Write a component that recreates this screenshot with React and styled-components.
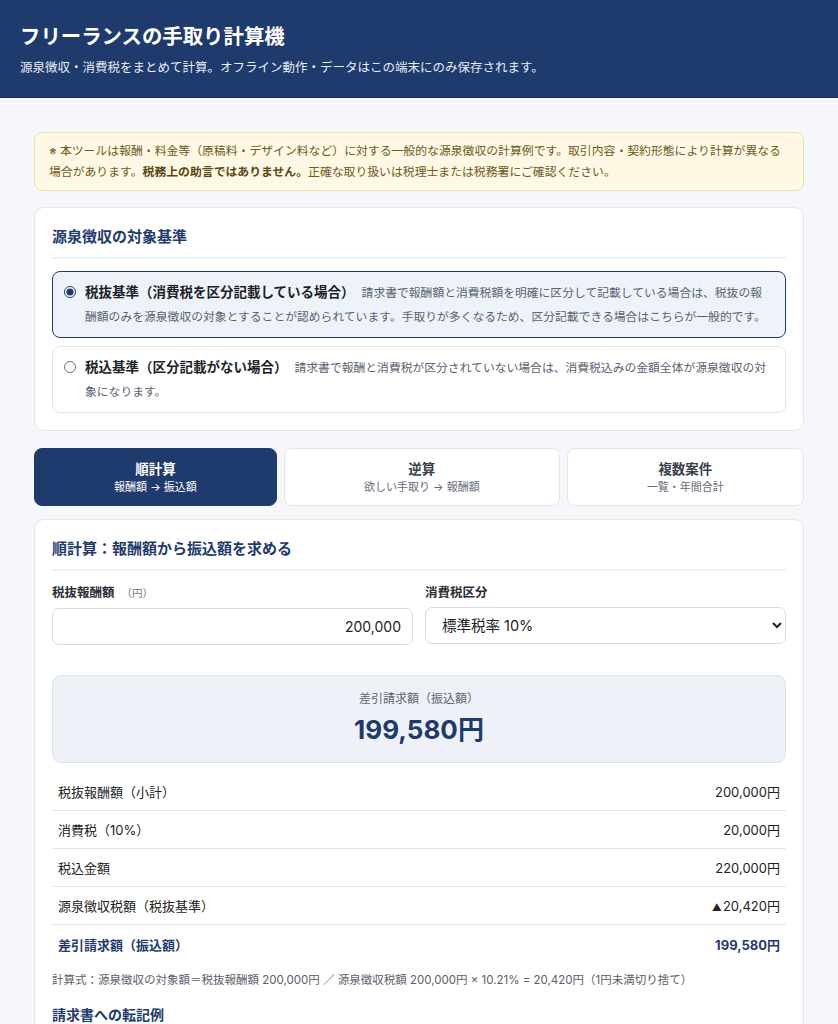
import React, { useState } from "react";
import styled, { createGlobalStyle } from "styled-components";

const NAVY = "#1f3a6d";

const Global = createGlobalStyle`
  * { box-sizing: border-box; }
  body {
    margin: 0;
    background: #f5f7fb;
    font-family: "Inter", "Noto Sans CJK JP", sans-serif;
    color: #222;
  }
`;

const Header = styled.header`
  background: ${NAVY};
  color: #fff;
  padding: 22px 20px 20px;
  border-bottom: 1px solid #16305c;
`;

const Title = styled.h1`
  margin: 0;
  font-size: 20.4px;
  font-weight: 700;
  line-height: 30px;
`;

const Subtitle = styled.p`
  margin: 7px 0 0;
  font-size: 12.5px;
  line-height: 18px;
  color: #e8edf6;
`;

const Main = styled.main`
  padding: 34px 34px 40px;
  display: flex;
  flex-direction: column;
`;

const Notice = styled.div`
  background: #fef8e4;
  border: 1px solid #f0dca6;
  border-radius: 8px;
  padding: 7.5px 12px 7.5px 14px;
  font-size: 11.85px;
  line-height: 21px;
  color: #6d5a1c;
  margin-bottom: 16px;
  b { font-weight: 700; color: #5a4710; }
`;

const Card = styled.section`
  background: #fff;
  border: 1px solid #e2e7ee;
  border-radius: 10px;
  padding: 18px 17px 17px;
`;

const CardTitle = styled.h2`
  margin: 0 0 12px;
  font-size: 15px;
  font-weight: 700;
  color: ${NAVY};
  line-height: 22px;
  padding: 0 0 9px;
  border-bottom: 2px solid #eef1f5;
`;

const Options = styled.div`
  display: flex;
  flex-direction: column;
  gap: 8px;
`;

const Option = styled.label`
  display: flex;
  align-items: flex-start;
  gap: 9px;
  padding: 8px 14px 8px 11px;
  border-radius: 8px;
  border: 1px solid ${(p) => (p.$active ? NAVY : "#e2e7ee")};
  background: ${(p) => (p.$active ? "#eef3fa" : "#fff")};
  cursor: pointer;
`;

const Radio = styled.input`
  margin: 6px 0 0;
  width: 12px;
  height: 12px;
  flex: none;
  accent-color: ${NAVY};
`;

const OptionText = styled.span`
  font-size: 11.8px;
  line-height: 24px;
  color: #5a6170;
  strong {
    font-size: 13.5px;
    color: #1c1f26;
    font-weight: 700;
    margin-right: 7px;
  }
`;

const Tabs = styled.div`
  display: flex;
  gap: 7px;
  margin: 17px 0 13px;
`;

const Tab = styled.button`
  flex: 1 1 auto;
  height: 58px;
  border-radius: 8px;
  border: 1px solid ${(p) => (p.$active ? NAVY : "#e2e7ee")};
  background: ${(p) => (p.$active ? NAVY : "#fff")};
  font-family: inherit;
  display: flex;
  flex-direction: column;
  align-items: center;
  justify-content: center;
  padding: 0 30px;
  cursor: pointer;
`;

const TabTitle = styled.span`
  font-size: 13.5px;
  font-weight: 700;
  line-height: 20px;
  color: ${(p) => (p.$active ? "#fff" : "#3a3f4a")};
`;

const TabSub = styled.span`
  font-size: 11px;
  line-height: 16px;
  color: ${(p) => (p.$active ? "#fff" : "#666c78")};
`;

const FormRow = styled.div`
  display: grid;
  grid-template-columns: 1fr 1fr;
  gap: 12px;
  margin-top: 1px;
`;

const Field = styled.div`
  display: flex;
  flex-direction: column;
  gap: 4px;
`;

const Label = styled.label`
  font-size: 12.5px;
  font-weight: 700;
  color: #2a2e36;
  line-height: 20px;
  small {
    font-size: 10.5px;
    font-weight: 400;
    color: #777;
    margin-left: 7px;
  }
`;

const Input = styled.input`
  height: 37px;
  border: 1px solid #d6dce5;
  border-radius: 7px;
  padding: 0 11px;
  font-size: 14px;
  font-family: inherit;
  text-align: right;
  color: #222;
  background: #fff;
`;

const Select = styled.select`
  height: 37px;
  border: 1px solid #d6dce5;
  border-radius: 7px;
  padding: 0 8px 0 12px;
  font-size: 14.5px;
  font-family: inherit;
  color: #222;
  background: #fff;
`;

const ResultBox = styled.div`
  margin-top: 30px;
  background: #eef2f8;
  border: 1px solid #dbe2ec;
  border-radius: 9px;
  height: 88px;
  display: flex;
  flex-direction: column;
  align-items: center;
  justify-content: center;
  gap: 4px;
`;

const ResultLabel = styled.div`
  font-size: 12px;
  color: #60656f;
  line-height: 18px;
`;

const ResultValue = styled.div`
  font-size: 26px;
  font-weight: 700;
  color: ${NAVY};
  line-height: 36px;
`;

const Table = styled.div`
  margin-top: 10px;
  display: flex;
  flex-direction: column;
`;

const Row = styled.div`
  display: flex;
  justify-content: space-between;
  align-items: center;
  height: 38px;
  padding: 0 6px;
  font-size: 13px;
  border-bottom: ${(p) => (p.$total ? "none" : "1px solid #e2e7ee")};
  font-weight: ${(p) => (p.$total ? 700 : 400)};
  color: ${(p) => (p.$total ? NAVY : "#222")};
`;

const Minus = styled.span`
  font-size: 10px;
  margin-right: 1px;
`;

const Formula = styled.p`
  margin: 8px 0 0;
  font-size: 11.5px;
  line-height: 18px;
  color: #5b606a;
`;

const SubHeading = styled.h3`
  margin: 15px 0 0;
  font-size: 14px;
  font-weight: 700;
  color: ${NAVY};
  line-height: 22px;
`;

export default function App() {
  const [basis, setBasis] = useState("ex");
  const [tab, setTab] = useState(0);
  const rows = [
    ["税抜報酬額（小計）", "200,000円"],
    ["消費税（10%）", "20,000円"],
    ["税込金額", "220,000円"],
  ];
  const tabs = [
    ["順計算", "報酬額 → 振込額"],
    ["逆算", "欲しい手取り → 報酬額"],
    ["複数案件", "一覧・年間合計"],
  ];
  return (
    <>
      <Global />
      <Header>
        <Title>フリーランスの手取り計算機</Title>
        <Subtitle>源泉徴収・消費税をまとめて計算。オフライン動作・データはこの端末にのみ保存されます。</Subtitle>
      </Header>
      <Main>
        <Notice>
          ※ 本ツールは報酬・料金等（原稿料・デザイン料など）に対する一般的な源泉徴収の計算例です。取引内容・契約形態により計算が異なる場合があります。<b>税務上の助言ではありません。</b>正確な取り扱いは税理士または税務署にご確認ください。
        </Notice>
        <Card>
          <CardTitle>源泉徴収の対象基準</CardTitle>
          <Options>
            <Option $active={basis === "ex"}>
              <Radio type="radio" name="basis" checked={basis === "ex"} onChange={() => setBasis("ex")} />
              <OptionText>
                <strong>税抜基準（消費税を区分記載している場合）</strong>
                請求書で報酬額と消費税額を明確に区分して記載している場合は、税抜の報酬額のみを源泉徴収の対象とすることが認められています。手取りが多くなるため、区分記載できる場合はこちらが一般的です。
              </OptionText>
            </Option>
            <Option $active={basis === "in"}>
              <Radio type="radio" name="basis" checked={basis === "in"} onChange={() => setBasis("in")} />
              <OptionText>
                <strong>税込基準（区分記載がない場合）</strong>
                請求書で報酬と消費税が区分されていない場合は、消費税込みの金額全体が源泉徴収の対象になります。
              </OptionText>
            </Option>
          </Options>
        </Card>
        <Tabs>
          {tabs.map(([t, s], i) => (
            <Tab key={t} $active={tab === i} onClick={() => setTab(i)}>
              <TabTitle $active={tab === i}>{t}</TabTitle>
              <TabSub $active={tab === i}>{s}</TabSub>
            </Tab>
          ))}
        </Tabs>
        <Card>
          <CardTitle>順計算：報酬額から振込額を求める</CardTitle>
          <FormRow>
            <Field>
              <Label>
                税抜報酬額<small>（円）</small>
              </Label>
              <Input defaultValue="200,000" />
            </Field>
            <Field>
              <Label>消費税区分</Label>
              <Select defaultValue="10">
                <option value="10">標準税率 10%</option>
                <option value="8">軽減税率 8%</option>
                <option value="0">非課税・免税 0%</option>
              </Select>
            </Field>
          </FormRow>
          <ResultBox>
            <ResultLabel>差引請求額（振込額）</ResultLabel>
            <ResultValue>199,580円</ResultValue>
          </ResultBox>
          <Table>
            {rows.map(([k, v]) => (
              <Row key={k}>
                <span>{k}</span>
                <span>{v}</span>
              </Row>
            ))}
            <Row>
              <span>源泉徴収税額（税抜基準）</span>
              <span>
                <Minus>▲</Minus>20,420円
              </span>
            </Row>
            <Row $total>
              <span>差引請求額（振込額）</span>
              <span>199,580円</span>
            </Row>
          </Table>
          <Formula>
            計算式：源泉徴収の対象額＝税抜報酬額 200,000円 ／ 源泉徴収税額 200,000円 × 10.21% = 20,420円（1円未満切り捨て）
          </Formula>
          <SubHeading>請求書への転記例</SubHeading>
        </Card>
      </Main>
    </>
  );
}
